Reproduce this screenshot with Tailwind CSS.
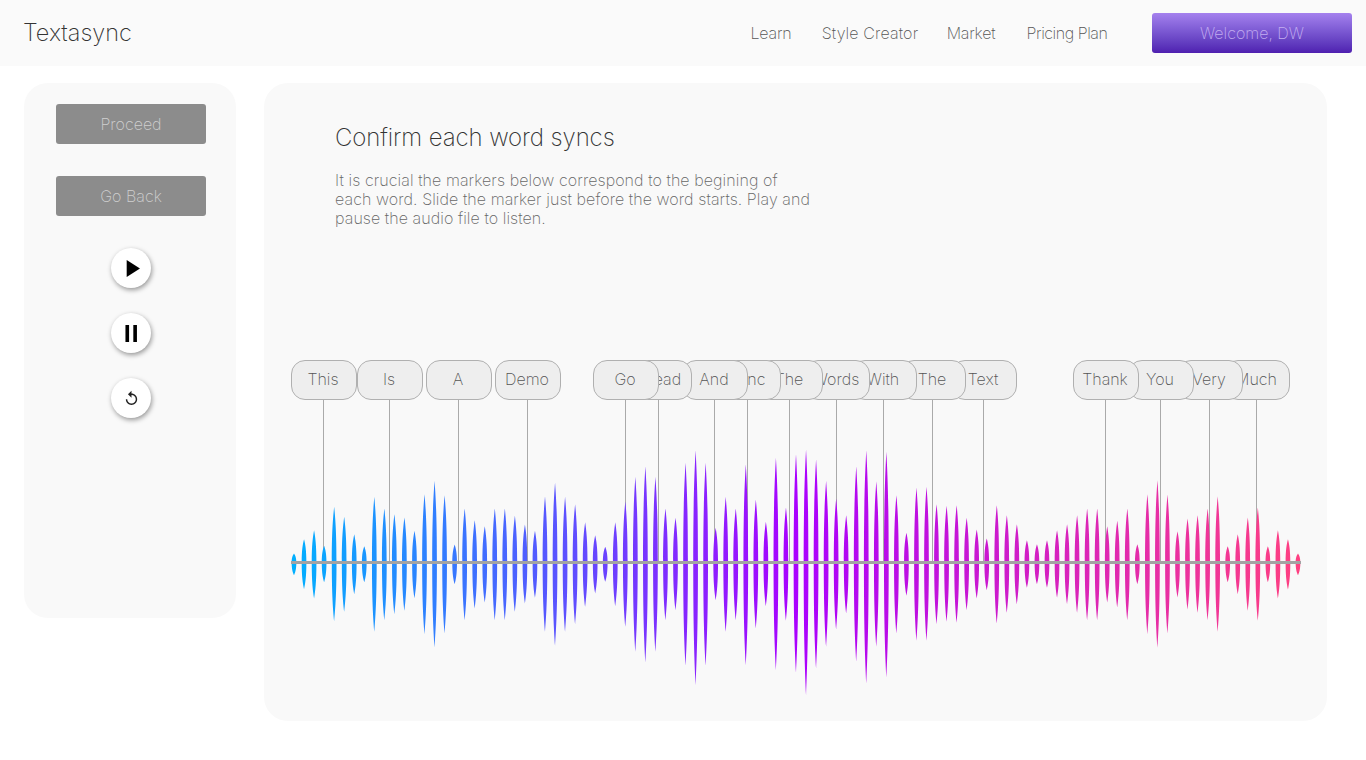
<!DOCTYPE html>
<html lang="en">
<head>
  <meta charset="UTF-8" />
  <meta name="viewport" content="width=device-width, initial-scale=1.0"/>
  <title>Textasync</title>
  <script src="https://cdn.jsdelivr.net/npm/@tailwindcss/browser@4"></script>
</head>
<body class="bg-white min-h-screen font-['Inter',sans-serif] font-extralight text-[#777]">
  <!-- Top bar -->
  <header class="h-[66px] bg-[#fafafa] flex items-center pl-[23px] pr-[14px]">
    <div class="text-[23.5px] text-[#333] font-extralight">Textasync</div>
    <nav class="ml-auto flex items-center text-base font-extralight text-[#555] tracking-[-0.2px]">
      <a class="w-[70px] text-center">Learn</a>
      <a class="w-[128px] text-center tracking-[0.15px]">Style Creator</a>
      <a class="w-[74px] text-center">Market</a>
      <a class="w-[118px] text-center tracking-[-0.45px]">Pricing Plan</a>
    </nav>
    <button class="ml-[26px] w-[200px] h-10 rounded-[3px] bg-gradient-to-b from-[#a581ee] to-[#4f1fb0] text-base font-extralight text-[#c3aef0]">Welcome, DW</button>
  </header>

  <div class="flex items-start pt-[17px] pl-6">
    <!-- Controls -->
    <aside class="w-[212px] h-[535px] rounded-3xl bg-[#f9f9f9] pl-8 pt-[21px]">
      <div class="w-[150px] flex flex-col items-center">
        <button class="w-full h-10 rounded-[3px] bg-[#8c8c8c] text-base font-extralight text-[#d0d0d0]">Proceed</button>
        <button class="w-full h-10 rounded-[3px] bg-[#8c8c8c] text-base font-extralight text-[#d0d0d0] mt-8">Go Back</button>
        <button class="mt-8 w-10 h-10 rounded-full bg-white shadow-[1px_2px_5px_rgba(0,0,0,0.4)] flex items-center justify-center">
          <svg class="w-[29px] h-[29px]" viewBox="0 0 24 24"><path d="M8 5v14l11-7z"/></svg>
        </button>
        <button class="mt-[25px] w-10 h-10 rounded-full bg-white shadow-[1px_2px_5px_rgba(0,0,0,0.4)] flex items-center justify-center">
          <svg class="w-[29px] h-[29px]" viewBox="0 0 24 24"><path d="M7 5h3v14H7zM13.5 5h3v14h-3z"/></svg>
        </button>
        <button class="mt-[25px] w-10 h-10 rounded-full bg-white shadow-[1px_2px_5px_rgba(0,0,0,0.4)] flex items-center justify-center">
          <svg class="w-[17px] h-[17px]" viewBox="0 0 24 24" fill="#222"><path d="M12 5V1L7 6l5 5V7c3.31 0 6 2.69 6 6s-2.69 6-6 6-6-2.69-6-6H4c0 4.42 3.58 8 8 8s8-3.58 8-8-3.58-8-8-8z"/></svg>
        </button>
      </div>
    </aside>

    <!-- Sync editor -->
    <main class="ml-7 w-[1063px] h-[638px] rounded-3xl bg-[#f9f9f9] pt-[39px]">
      <h1 class="ml-[71px] text-2xl leading-8 font-extralight text-[#333] tracking-[-0.1px]">Confirm each word syncs</h1>
      <p class="ml-[71px] mt-[17px] w-[490px] text-base leading-[19px] text-[#666] font-extralight tracking-[0.08px]">It is crucial the markers below correspond to the begining of<br>each word. Slide the marker just before the word starts. Play and<br>pause the audio file to listen.</p>

      <div id="wave" class="relative ml-[27px] mt-[132px] w-[1010px] h-[340px]">
        <div id="lines"></div>
        <svg class="absolute left-0 top-0 w-[1010px] h-[340px]" viewBox="0 0 1010 340">
          <defs>
            <linearGradient id="grad" gradientUnits="userSpaceOnUse" x1="0" y1="0" x2="1010" y2="0">
              <stop offset="0" stop-color="#00b0ff"/>
              <stop offset="0.5" stop-color="#aa00ff"/>
              <stop offset="1" stop-color="#ff4081"/>
            </linearGradient>
          </defs>
          <path id="bars" fill="url(#grad)"/>
        </svg>
        <div class="absolute left-0 top-[201px] w-[1010px] h-[3px] bg-[#a3a3a3]"></div>
        <div id="markers"></div>
      </div>
    </main>
  </div>

  <script>
    // [top, bottom] of each bar, measured on a 3x crop with the axis at 637
    const peaks = [
      [610,675],[567,717],[540,745],[587,696],[470,813],[500,785],[552,732],[588,696],[440,845],[475,810],
      [492,792],[502,782],[542,744],[432,852],[392,892],[435,850],[583,702],[475,810],[510,775],[528,757],
      [475,810],[475,810],[497,785],[523,760],[542,743],[438,845],[397,887],[440,845],[462,822],[516,770],
      [555,730],[590,695],[516,768],[453,830],[380,905],[348,937],[380,905],[475,810],[503,780],[338,947],
      [300,1005],[338,947],[533,750],[440,845],[475,810],[342,945],[448,835],[515,768],[323,960],[472,812],
      [312,968],[298,1035],[327,955],[392,890],[445,838],[495,790],[348,935],[300,1000],[393,890],[305,982],
      [435,850],[548,737],[412,872],[410,872],[462,822],[467,815],[465,818],[503,780],[538,745],[565,720],
      [465,820],[495,788],[522,762],[570,713],[582,702],[570,713],[540,743],[522,762],[495,788],[475,810],
      [475,810],[528,757],[512,772],[475,810],[582,702],[432,852],[390,893],[433,850],[543,742],[505,778],
      [495,788],[475,810],[438,845],[588,696],[552,732],[502,782],[472,812],[588,696],[540,745],[567,718],
      [610,675]
    ];

    const axis = 202.5;
    const hw = 2.35;
    document.getElementById('bars').setAttribute('d', peaks.map(([t, b], i) => {
      const x = 3 + i * 10.04;
      const up = (637 - t) / 3;
      const down = (b - 637) / 3;
      // spindle: narrow tip, full belly at the axis
      return `M${x} ${axis - up}` +
        `C${x + hw * 0.5} ${axis - up * 0.8} ${x + hw} ${axis - up * 0.55} ${x + hw} ${axis}` +
        `C${x + hw} ${axis + down * 0.55} ${x + hw * 0.5} ${axis + down * 0.8} ${x} ${axis + down}` +
        `C${x - hw * 0.5} ${axis + down * 0.8} ${x - hw} ${axis + down * 0.55} ${x - hw} ${axis}` +
        `C${x - hw} ${axis - up * 0.55} ${x - hw * 0.5} ${axis - up * 0.8} ${x} ${axis - up}Z`;
    }).join(''));

    // left edge of each marker inside the wave box
    const words = [
      ['This', 0], ['Is', 66], ['A', 135], ['Demo', 204], ['Go', 302], ['Read', 335, 'pl-[9px]'],
      ['And', 391], ['Sync', 424], ['The', 466], ['Words', 513], ['With', 560], ['The', 609],
      ['Text', 660], ['Thank', 782], ['You', 837], ['Very', 886], ['Much', 933]
    ];

    const lines = document.getElementById('lines');
    const markers = document.getElementById('markers');

    words.forEach(([word, left]) => {
      const line = document.createElement('div');
      line.className = 'absolute top-[40px] w-px h-[162px] bg-[#aaaaaa]';
      line.style.left = (left + 32) + 'px';
      lines.appendChild(line);
    });

    // earlier words sit on top of later ones
    [...words].reverse().forEach(([word, left, extra]) => {
      const pill = document.createElement('div');
      pill.className = 'absolute top-0 w-[66px] h-10 rounded-[14px] border border-[#b0b0b0] bg-[#eeeeee] flex items-center justify-center text-base font-extralight text-[#555] pr-0.5 pb-0.5 ' + (extra || '');
      pill.style.left = left + 'px';
      pill.textContent = word;
      markers.appendChild(pill);
    });
  </script>
</body>
</html>
